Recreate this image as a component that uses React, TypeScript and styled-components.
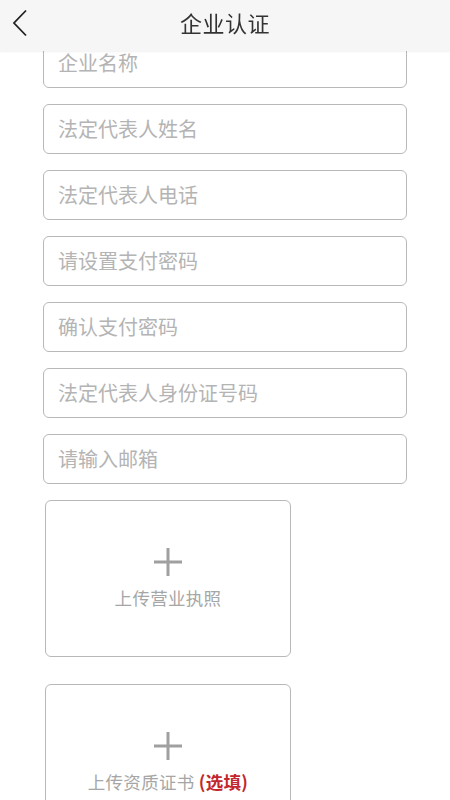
import React from 'react'
import styled, { createGlobalStyle } from 'styled-components'

const GlobalStyle = createGlobalStyle`
	html, body {
		margin: 0;
		padding: 0;
		background: #ffffff;
		font-family: 'Noto Sans CJK SC', 'Noto Sans', sans-serif;
	}
`

const Header = styled.header`
	position: fixed;
	top: 0;
	left: 0;
	right: 0;
	height: 51px;
	background: #f6f6f6;
	box-shadow: 0 1px 2px rgba(0, 0, 0, 0.06);
	display: flex;
	align-items: center;
	justify-content: center;
	z-index: 10;
`

const BackButton = styled.button`
	position: absolute;
	left: 10px;
	top: 8px;
	width: 20px;
	height: 30px;
	padding: 0;
	border: none;
	background: transparent;
	display: flex;
	align-items: center;
	justify-content: center;
`

const Title = styled.h1`
	margin: 0 0 7px;
	font-size: 22px;
	font-weight: 400;
	color: #333333;
	letter-spacing: 0.5px;
`

const Content = styled.main`
	padding: 38px 43px 40px 43px;
	display: flex;
	flex-direction: column;
`

const Field = styled.input`
	box-sizing: border-box;
	width: 364px;
	height: 50px;
	margin-bottom: 16px;
	padding: 0 14px 2px;
	border: 1px solid #b8b8b8;
	border-radius: 6px;
	font-family: inherit;
	font-size: 20px;
	color: #333;
	background: #fff;
	outline: none;

	&::placeholder {
		color: #b4b4b4;
	}
`

const Upload = styled.div<{ $first?: boolean }>`
	box-sizing: border-box;
	width: 246px;
	height: 157px;
	margin-left: 2px;
	margin-top: ${(p) => (p.$first ? '0' : '27px')};
	border: 1px solid #b8b8b8;
	border-radius: 6px;
	display: flex;
	flex-direction: column;
	align-items: center;
	padding-top: 46px;
`

const UploadLabel = styled.div`
	margin-top: 8px;
	font-size: 17.5px;
	color: #a6a6a6;
	letter-spacing: 0.3px;
`

const Optional = styled.span`
	color: #c1272d;
	font-weight: 700;
`

const Plus = () => (
	<svg width="30" height="30" viewBox="0 0 30 30">
		<path d="M15 1v28M1 15h28" stroke="#a0a0a0" strokeWidth="3" fill="none" />
	</svg>
)

const fields = [
	'企业名称',
	'法定代表人姓名',
	'法定代表人电话',
	'请设置支付密码',
	'确认支付密码',
	'法定代表人身份证号码',
	'请输入邮箱',
]

export default function App() {
	return (
		<>
			<GlobalStyle />
			<Header>
				<BackButton>
					<svg width="16" height="28" viewBox="0 0 16 28">
						<path d="M14 1.5L2 14l12 12.5" stroke="#222" strokeWidth="1.8" fill="none" />
					</svg>
				</BackButton>
				<Title>企业认证</Title>
			</Header>
			<Content>
				{fields.map((f) => (
					<Field key={f} placeholder={f} />
				))}
				<Upload $first>
					<Plus />
					<UploadLabel>上传营业执照</UploadLabel>
				</Upload>
				<Upload>
					<Plus />
					<UploadLabel>
						上传资质证书 <Optional>(选填)</Optional>
					</UploadLabel>
				</Upload>
			</Content>
		</>
	)
}
